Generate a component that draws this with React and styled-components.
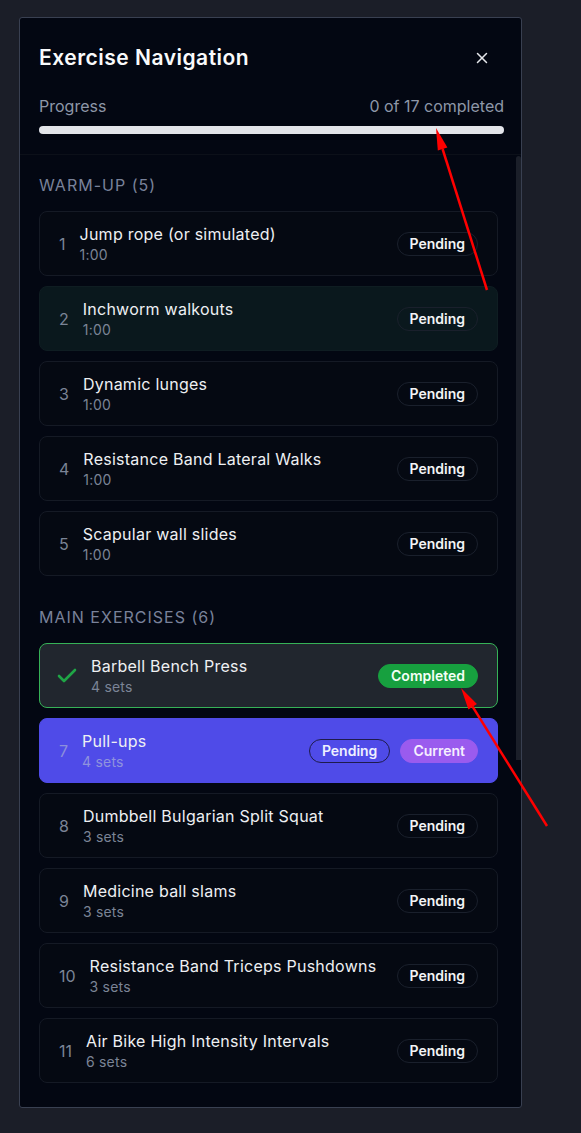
import React from "react";
import styled, { createGlobalStyle, css } from "styled-components";
import { X, Check } from "lucide-react";

const GlobalStyle = createGlobalStyle`
  body {
    margin: 0;
    background-color: #1b1e28;
    font-family: "Inter", "Liberation Sans", sans-serif;
  }
`;

const Page = styled.div`
  position: relative;
  min-height: 1133px;
  padding: 17px 0 0 19px;
  box-sizing: border-box;
`;

const Panel = styled.div`
  width: 503px;
  box-sizing: border-box;
  background-color: #030712;
  border: 1px solid #394051;
  border-radius: 3px;
  display: flex;
  flex-direction: column;
`;

const Header = styled.div`
  padding: 26px 17px 20px 19px;
  border-bottom: 1px solid #0c1019;
`;

const TitleRow = styled.div`
  display: flex;
  justify-content: space-between;
  align-items: center;
  height: 28px;
`;

const Title = styled.h2`
  margin: 0;
  font-size: 21px;
  font-weight: 600;
  letter-spacing: 0.5px;
  color: #f9fafb;
  line-height: 28px;
`;

const CloseButton = styled.button`
  width: 36px;
  height: 36px;
  margin-right: 4px;
  background: transparent;
  border: none;
  color: #e5e7eb;
  display: flex;
  align-items: center;
  justify-content: center;
  cursor: pointer;
  padding: 0;
`;

const ProgressRow = styled.div`
  display: flex;
  justify-content: space-between;
  margin-top: 23px;
  font-size: 16px;
  line-height: 22px;
  color: #8e97a8;
`;

const ProgressTrack = styled.div`
  height: 8px;
  margin-top: 9px;
  border-radius: 999px;
  background-color: #e3e5ea;
  overflow: hidden;
`;

const ProgressFill = styled.div`
  height: 100%;
  background-color: #4f46e5;
`;

const Body = styled.div`
  display: flex;
`;

const List = styled.div`
  flex: 1;
  padding: 19px 18px 24px 19px;
`;

const ScrollRail = styled.div`
  width: 5px;
`;

const ScrollThumb = styled.div`
  height: 604px;
  margin-top: 1px;
  background-color: #1b1f29;
  border-radius: 3px 3px 0 0;
`;

const Section = styled.div`
  & + & {
    margin-top: 30px;
  }
`;

const SectionLabel = styled.div`
  font-size: 16px;
  line-height: 22px;
  letter-spacing: 1px;
  text-transform: uppercase;
  color: #79829a;
  margin-bottom: 15px;
`;

const Cards = styled.div`
  display: flex;
  flex-direction: column;
  gap: 10px;
`;

const cardVariants = {
  default: css`
    background-color: #050912;
    border-color: #151a25;
  `,
  hover: css`
    background-color: #0a181d;
    border-color: #0f1d22;
  `,
  completed: css`
    background-color: #21262e;
    border-color: #36b257;
  `,
  current: css`
    background-color: #4f4be8;
    border-color: #4f4be8;
  `,
};

const Card = styled.div`
  height: 65px;
  box-sizing: border-box;
  border: 1px solid;
  border-radius: 8px;
  padding: 0 19px 0 19px;
  display: flex;
  align-items: center;
  gap: 14px;
  ${(p) => cardVariants[p.$variant]}
`;

const Num = styled.span`
  font-size: 16px;
  color: ${(p) => (p.$current ? "#8c8fdc" : "#7b8496")};
`;

const CheckMark = styled.span`
  display: flex;
  margin: 0 -2px 0 -4px;
  color: #1fa546;
`;

const Info = styled.div`
  flex: 1;
  display: flex;
  flex-direction: column;
  min-width: 0;
`;

const Name = styled.div`
  font-size: 16px;
  line-height: 22px;
  font-weight: 400;
  letter-spacing: 0.25px;
  color: #eef0f3;
`;

const Sub = styled.div`
  font-size: 14px;
  line-height: 20px;
  font-weight: 400;
  letter-spacing: 0.2px;
  color: ${(p) => (p.$current ? "#8f93dd" : "#7b8496")};
`;

const Badges = styled.div`
  display: flex;
  gap: 10px;
`;

const badgeVariants = {
  pending: css`
    border: 1px solid #1a202c;
    color: #f3f4f6;
  `,
  pendingOnCurrent: css`
    border: 1.5px solid #1e1b4b;
    color: #eef0ff;
  `,
  completed: css`
    border: 1px solid #17a03f;
    background-color: #17a03f;
    color: #f3fff6;
  `,
  current: css`
    border: 1px solid #9a5bee;
    background-color: #9a5bee;
    color: #f6efff;
  `,
};

const Badge = styled.span`
  height: 24px;
  box-sizing: border-box;
  padding: 0 12px;
  border-radius: 999px;
  display: inline-flex;
  align-items: center;
  font-size: 14px;
  font-weight: 600;
  ${(p) => badgeVariants[p.$variant]}
`;

const Annotations = styled.svg`
  position: absolute;
  top: 0;
  left: 0;
  pointer-events: none;
`;

const sections = [
  {
    title: "Warm-up",
    items: [
      { n: 1, name: "Jump rope (or simulated)", sub: "1:00" },
      { n: 2, name: "Inchworm walkouts", sub: "1:00", state: "hover" },
      { n: 3, name: "Dynamic lunges", sub: "1:00" },
      { n: 4, name: "Resistance Band Lateral Walks", sub: "1:00" },
      { n: 5, name: "Scapular wall slides", sub: "1:00" },
    ],
  },
  {
    title: "Main Exercises",
    items: [
      { n: 6, name: "Barbell Bench Press", sub: "4 sets", state: "completed" },
      { n: 7, name: "Pull-ups", sub: "4 sets", state: "current" },
      { n: 8, name: "Dumbbell Bulgarian Split Squat", sub: "3 sets" },
      { n: 9, name: "Medicine ball slams", sub: "3 sets" },
      { n: 10, name: "Resistance Band Triceps Pushdowns", sub: "3 sets" },
      { n: 11, name: "Air Bike High Intensity Intervals", sub: "6 sets" },
    ],
  },
];

function ExerciseCard({ item }) {
  const state = item.state || "default";
  const isCurrent = state === "current";
  const isDone = state === "completed";

  return (
    <Card $variant={state}>
      {isDone ? (
        <CheckMark>
          <Check size={24} strokeWidth={2.6} />
        </CheckMark>
      ) : (
        <Num $current={isCurrent}>{item.n}</Num>
      )}
      <Info>
        <Name>{item.name}</Name>
        <Sub $current={isCurrent}>{item.sub}</Sub>
      </Info>
      <Badges>
        {isDone ? (
          <Badge $variant="completed">Completed</Badge>
        ) : (
          <Badge $variant={isCurrent ? "pendingOnCurrent" : "pending"}>Pending</Badge>
        )}
        {isCurrent && <Badge $variant="current">Current</Badge>}
      </Badges>
    </Card>
  );
}

export default function App() {
  const done = 0;
  const total = 17;

  return (
    <Page>
      <GlobalStyle />
      <Panel>
        <Header>
          <TitleRow>
            <Title>Exercise Navigation</Title>
            <CloseButton aria-label="Close">
              <X size={18} strokeWidth={2} />
            </CloseButton>
          </TitleRow>
          <ProgressRow>
            <span>Progress</span>
            <span>
              {done} of {total} completed
            </span>
          </ProgressRow>
          <ProgressTrack>
            <ProgressFill style={{ width: `${(done / total) * 100}%` }} />
          </ProgressTrack>
        </Header>
        <Body>
          <List>
            {sections.map((section) => (
              <Section key={section.title}>
                <SectionLabel>
                  {section.title} ({section.items.length})
                </SectionLabel>
                <Cards>
                  {section.items.map((item) => (
                    <ExerciseCard key={item.n} item={item} />
                  ))}
                </Cards>
              </Section>
            ))}
          </List>
          <ScrollRail>
            <ScrollThumb />
          </ScrollRail>
        </Body>
      </Panel>

      {/* red annotation arrows */}
      <Annotations width="581" height="1133" viewBox="0 0 581 1133">
        <line x1="487" y1="290" x2="442.6" y2="149" stroke="#ff0000" strokeWidth="2.5" />
        <polygon points="436,128 447.4,147.5 437.8,150.5" fill="#ff0000" />
        <line x1="547" y1="826" x2="472.6" y2="706.7" stroke="#ff0000" strokeWidth="2.5" />
        <polygon points="461,688 476.9,704.1 468.4,709.4" fill="#ff0000" />
      </Annotations>
    </Page>
  );
}
